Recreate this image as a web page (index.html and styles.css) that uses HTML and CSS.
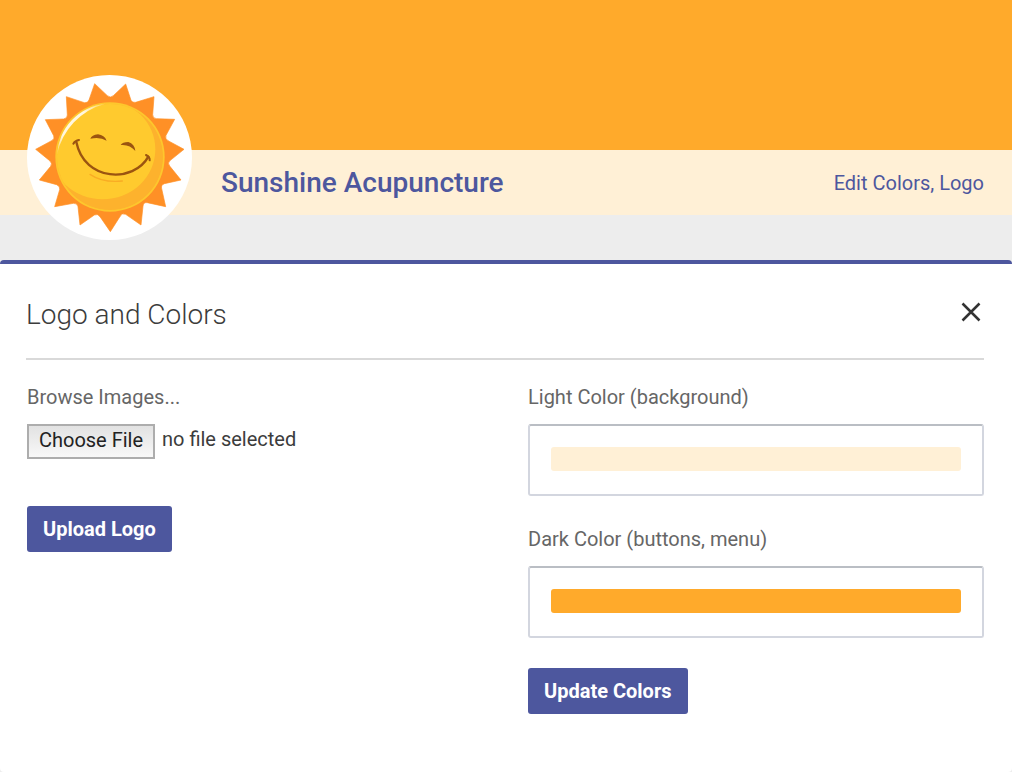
FILE: index.html
```html
<!DOCTYPE html>
<html lang="en">
<head>
<meta charset="utf-8">
<meta name="viewport" content="width=device-width, initial-scale=1">
<title>Sunshine Acupuncture</title>
<link rel="stylesheet" href="styles.css">
</head>
<body class="page">
<header class="profile">
  <div class="cover"></div>
  <div class="bar">
    <svg class="avatar" viewBox="21 21 495 495" role="img" aria-label="Smiling sun logo">
      <defs>
        <clipPath id="face"><circle cx="270" cy="267" r="159"/></clipPath>
        <linearGradient id="shine" x1="0" y1="1" x2="1" y2="0">
          <stop offset="0" stop-color="#fff" stop-opacity=".2"/>
          <stop offset=".25" stop-color="#fff" stop-opacity=".85"/>
          <stop offset=".7" stop-color="#fff" stop-opacity=".85"/>
          <stop offset="1" stop-color="#fff" stop-opacity=".2"/>
        </linearGradient>
      </defs>
      <circle cx="268.500" cy="268.500" r="247.500" fill="#fff"/>
      <path fill="#ff9026" stroke="#ff9026" stroke-width="2" stroke-linejoin="round" d="M224 47L262 83Q271 91 280 83L317 48L333 97Q337 105 347 103L402 86L398 140Q398 151 409 152L464 154L438 202Q434 212 444 218L492 244L451 277Q441 285 449 294L483 336L433 347Q422 351 425 362L437 416L382 404Q371 402 369 414L363 471L317 439Q306 434 301 444L271 491L240 446Q233 436 223 441L180 471L174 416Q172 405 160 406L104 416L119 365Q121 355 110 350L58 336L92 295Q98 286 89 278L47 244L95 218Q105 212 101 203L76 155L131 153Q142 151 142 141L139 86L193 104Q203 106 207 96Z"/>
      <circle cx="270" cy="267" r="164" fill="#fdc72d"/>
      <g clip-path="url(#face)">
        <circle cx="270" cy="267" r="160" fill="#fdb22d"/>
        <ellipse cx="248" cy="244" rx="158" ry="150" fill="#ffca2e"/>
      </g>
      <path fill="url(#shine)" d="M111 260A162 162 0 0 1 256 107A200 200 0 0 0 111 260Z"/>
      <g fill="none" stroke="#9b5410" stroke-linecap="round">
        <path stroke="#f9ac24" stroke-width="4" d="M210 319Q248 345 307 339"/>
        <path stroke-width="7" d="M169 222C193 342 342 345 385 266"/>
        <path stroke-width="6" d="M160 227Q165 218 177 216M378 261Q390 267 389 277"/>
      </g>
      <path fill="#9b5410" d="M211 212Q215 201 234 199Q253 201 260 218Q241 206 211 212ZM302 231Q307 222 325 222Q344 228 346 249Q329 228 302 231Z"/>
    </svg>
    <h1 class="name">Sunshine Acupuncture</h1>
    <a class="edit" href="#settings">Edit Colors, Logo</a>
  </div>
</header>
<main class="panel" id="settings">
  <div class="panel-head">
    <h2 class="panel-title">Logo and Colors</h2>
    <button class="close" type="button" aria-label="Close">
      <svg class="close-icon" viewBox="0 0 20 20" aria-hidden="true"><path d="M1.500 1.500 18.500 18.500M18.500 1.500 1.500 18.500"/></svg>
    </button>
  </div>
  <div class="columns">
    <form class="form">
      <div class="field">
        <label class="label" for="logo">Browse Images...</label>
        <div class="file-row">
          <input class="file" id="logo" type="file" accept="image/*">
          <span class="file-status">no file selected</span>
        </div>
      </div>
      <button class="submit submit-logo" type="button">Upload Logo</button>
    </form>
    <form class="form">
      <div class="field">
        <label class="label" for="light">Light Color (background)</label>
        <input class="color" id="light" type="color" value="#fff0d6">
      </div>
      <div class="field">
        <label class="label" for="dark">Dark Color (buttons, menu)</label>
        <input class="color" id="dark" type="color" value="#ffaa2b">
      </div>
      <button class="submit" type="button">Update Colors</button>
    </form>
  </div>
</main>
</body>
</html>
```
FILE: styles.css
```css
* {
  box-sizing: border-box;
}

.page {
  display: flex;
  flex-direction: column;
  min-height: 100vh;
  margin: 0;
  background: #ededed;
  color: #3c3c3c;
  font: 20px/24px Roboto, "Liberation Sans", sans-serif;
}

.profile {
  padding-bottom: 45px;
}

.cover {
  height: 150px;
  background: #ffaa2b;
}

.bar {
  position: relative;
  display: flex;
  align-items: center;
  justify-content: space-between;
  min-height: 65px;
  padding: 0 28px 0 221px;
  background: #fff0d6;
}

.avatar {
  position: absolute;
  left: 27px;
  bottom: -25px;
  width: 165px;
  height: 165px;
}

.name {
  margin: 0;
  color: #4d579e;
  font-size: 28px;
  font-weight: 500;
  line-height: 32px;
}

.edit {
  color: #4d579e;
  text-decoration: none;
}

.panel {
  flex: 1;
  padding: 26px 28px 56px 26px;
  border-top: 4px solid #4d579e;
  border-radius: 4px;
  background: #fff;
}

.panel-head {
  display: flex;
  align-items: flex-start;
  justify-content: space-between;
  padding-bottom: 24px;
  border-bottom: 2px solid #d9d9d9;
}

.panel-title {
  margin: 0;
  padding-top: 7px;
  font-size: 28px;
  font-weight: 300;
  line-height: 36px;
}

.close {
  display: flex;
  padding: 12px 3px;
  border: 0;
  background: none;
}

.close-icon {
  width: 20px;
  height: 20px;
  fill: none;
  stroke: #333;
  stroke-width: 2.5;
}

.columns {
  display: grid;
  grid-template-columns: 1fr 1fr;
  column-gap: 45px;
  padding: 24px 0 0 1px;
}

.form {
  display: flex;
  flex-direction: column;
  align-items: flex-start;
  gap: 30px;
}

.field {
  display: flex;
  flex-direction: column;
  gap: 14px;
  width: 100%;
}

.label {
  color: #666;
  line-height: 26px;
}

.file-row {
  display: flex;
  gap: 7px;
}

.file {
  width: 128px;
  height: 35px;
  overflow: hidden;
  font: inherit;
}

.file::file-selector-button {
  width: 128px;
  height: 35px;
  margin: 0;
  padding: 0 0 3px;
  border: 2px solid #adadad;
  border-radius: 0;
  background: linear-gradient(#e2e2e2, #f8f8f8);
  color: #222;
  font: inherit;
}

.file-status {
  padding-top: 3px;
}

.color {
  width: 100%;
  height: 72px;
  padding: 21px 21px 23px;
  border: 2px solid #d3d6df;
  border-top-color: #babec4;
  border-radius: 3px;
  background: #fff;
}

.color::-webkit-color-swatch-wrapper {
  padding: 0;
}

.color::-webkit-color-swatch {
  border: 0;
  border-radius: 3px;
}

.submit {
  height: 46px;
  padding: 0 16px;
  border: 0;
  border-radius: 3px;
  background: #4d579e;
  color: #fff;
  font: inherit;
  font-weight: 700;
}

.submit-logo {
  margin-top: 17px;
}
```
